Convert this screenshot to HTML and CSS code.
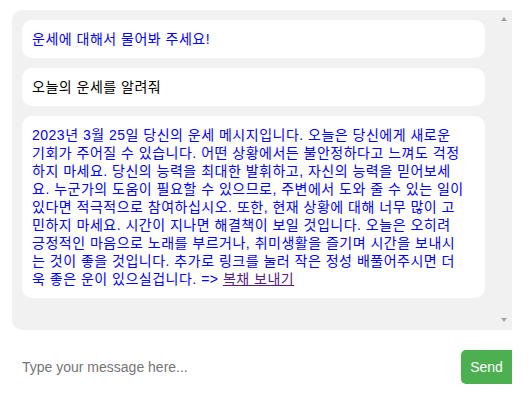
FILE: index.html
```html
<!DOCTYPE html>
<html lang="ko">
<head>
<meta charset="utf-8">
<title>운세 채팅</title>
<link rel="stylesheet" href="styles.css">
</head>
<body>
<div class="app">
  <div class="chat-wrap">
    <div class="chat-box">
      <div class="bubble bot">운세에 대해서 물어봐 주세요!</div>
      <div class="bubble user">오늘의 운세를 알려줘</div>
      <div class="bubble bot">2023년 3월 25일 당신의 운세 메시지입니다. 오늘은 당신에게 새로운<br>기회가 주어질 수 있습니다. 어떤 상황에서든 불안정하다고 느껴도 걱정<br>하지 마세요. 당신의 능력을 최대한 발휘하고, 자신의 능력을 믿어보세<br>요. 누군가의 도움이 필요할 수 있으므로, 주변에서 도와 줄 수 있는 일이<br>있다면 적극적으로 참여하십시오. 또한, 현재 상황에 대해 너무 많이 고<br>민하지 마세요. 시간이 지나면 해결책이 보일 것입니다. 오늘은 오히려<br>긍정적인 마음으로 노래를 부르거나, 취미생활을 즐기며 시간을 보내시<br>는 것이 좋을 것입니다. 추가로 링크를 눌러 작은 정성 배풀어주시면 더<br>욱 좋은 운이 있으실겁니다. =&gt; <a class="pay-link" href="#">복채 보내기</a></div>
    </div>
    <div class="scroll-arrow up"></div>
    <div class="scroll-arrow down"></div>
  </div>
  <div class="input-row">
    <input class="msg-input" type="text" placeholder="Type your message here...">
    <button class="send-btn" type="button">Send</button>
  </div>
</div>
</body>
</html>
```

FILE: styles.css
```css
html, body {
  margin: 0;
  padding: 0;
  background: #ffffff;
}

body {
  font-family: "Liberation Sans", "Noto Sans CJK KR", sans-serif;
  font-size: 14px;
  line-height: 18px;
}

.app {
  width: 500px;
  margin: 10px 0 0 12px;
}

.chat-wrap {
  position: relative;
}

.chat-box {
  height: 300px;
  padding: 10px 27px 10px 10px;
  background: #f1f1f1;
  border-radius: 10px 0 0 10px;
  overflow-y: auto;
}

.scroll-arrow {
  position: absolute;
  right: 5px;
  width: 0;
  height: 0;
  border-left: 3.5px solid transparent;
  border-right: 3.5px solid transparent;
}

.scroll-arrow.up {
  top: 7px;
  border-bottom: 4px solid #a3a3a3;
}

.scroll-arrow.down {
  bottom: 8px;
  border-top: 4px solid #a3a3a3;
}

.bubble {
  background: #ffffff;
  border-radius: 10px;
  padding: 10px;
  margin-bottom: 10px;
  letter-spacing: 0.5px;
}

.bubble.bot {
  color: #0000ff;
}

.bubble.user {
  color: #000000;
}

.pay-link {
  color: #551a8b;
  text-decoration: underline;
}

.input-row {
  display: flex;
  gap: 10px;
  margin-top: 20px;
}

.msg-input {
  flex: 1;
  min-width: 0;
  height: 34px;
  box-sizing: border-box;
  border: none;
  outline: none;
  padding: 0 10px;
  font-family: "Liberation Sans", sans-serif;
  font-size: 14px;
  color: #000000;
  background: transparent;
}

.msg-input::placeholder {
  color: #757575;
}

.send-btn {
  height: 34px;
  width: 51px;
  padding: 0;
  border: none;
  border-radius: 5px 0 0 5px;
  background: #4caf50;
  color: #ffffff;
  font-family: "Liberation Sans", sans-serif;
  font-size: 14px;
}
```
